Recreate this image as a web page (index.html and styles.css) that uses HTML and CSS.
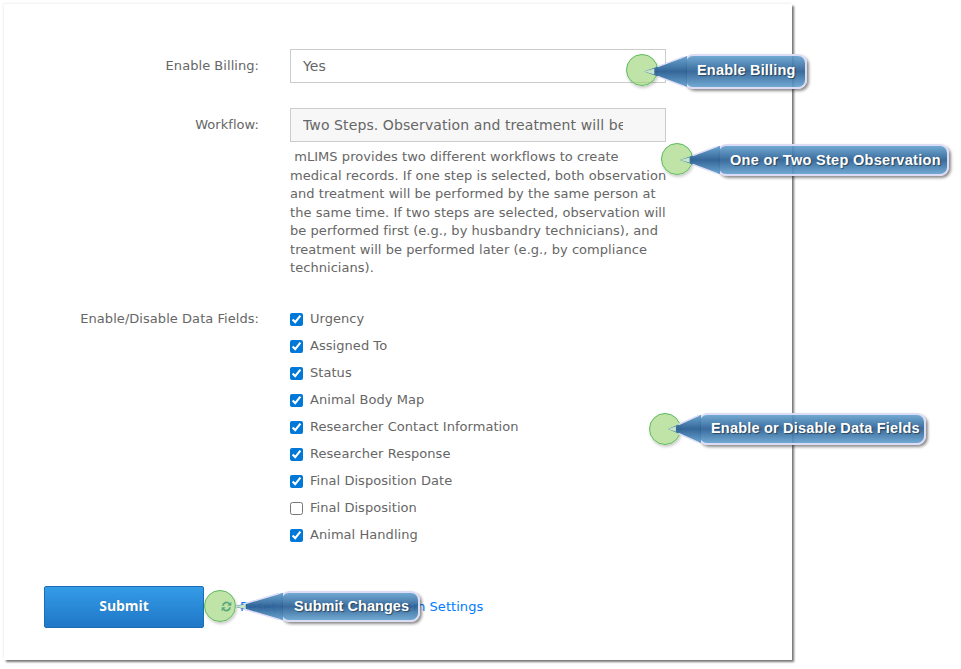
FILE: index.html
```html
<!DOCTYPE html>
<html lang="en">
<head>
<meta charset="utf-8">
<title>Settings</title>
<link rel="stylesheet" href="styles.css">
</head>
<body>
<main class="card">
  <form class="form">
    <div class="row">
      <label class="label" for="billing">Enable Billing:</label>
      <div class="field"><input id="billing" class="input" type="text" value="Yes" readonly></div>
    </div>
    <div class="row row-workflow">
      <label class="label" for="workflow">Workflow:</label>
      <div class="field">
        <input id="workflow" class="input input-muted" type="text" value="Two Steps. Observation and treatment will be performed separately" readonly>
        <p class="help">&nbsp;mLIMS provides two different workflows to create medical records. If one step is selected, both observation and treatment will be performed by the same person at the same time. If two steps are selected, observation will be performed first (e.g., by husbandry technicians), and treatment will be performed later (e.g., by compliance technicians).</p>
      </div>
    </div>
    <div class="row row-fields">
      <span class="label label-fields">Enable/Disable Data Fields:</span>
      <div class="checks">
        <label class="check"><input type="checkbox" checked>Urgency</label>
        <label class="check"><input type="checkbox" checked>Assigned To</label>
        <label class="check"><input type="checkbox" checked>Status</label>
        <label class="check"><input type="checkbox" checked>Animal Body Map</label>
        <label class="check"><input type="checkbox" checked>Researcher Contact Information</label>
        <label class="check"><input type="checkbox" checked>Researcher Response</label>
        <label class="check"><input type="checkbox" checked>Final Disposition Date</label>
        <label class="check"><input type="checkbox">Final Disposition</label>
        <label class="check"><input type="checkbox" checked>Animal Handling</label>
      </div>
    </div>
    <div class="actions">
      <button class="submit" type="button">Submit</button>
      <a class="link link-reset" href="#">
        <svg class="refresh" viewBox="0 0 16 16" width="13" height="13" aria-hidden="true"><path d="M2.4 7A5.7 5.7 0 0 1 12.3 3.7L14 2v5H9l1.8-1.8A3.5 3.5 0 0 0 4.8 7Z"/><path d="M13.6 9A5.7 5.7 0 0 1 3.7 12.3L2 14V9h5l-1.8 1.8A3.5 3.5 0 0 0 11.2 9Z"/></svg>Reset</a>
      <a class="link" href="#">System Settings</a>
    </div>
  </form>
</main>

<div class="dot dot-billing"></div>
<div class="bubble bubble-billing">Enable Billing</div>
<svg class="tail tail-billing" viewBox="0 0 50 36" preserveAspectRatio="none" aria-hidden="true">
  <defs>
    <linearGradient id="tailfill" x1="0" y1="0" x2="0" y2="1">
      <stop offset="0" stop-color="#62a0cd"/>
      <stop offset=".5" stop-color="#2a5f94"/>
      <stop offset="1" stop-color="#62a0cd"/>
    </linearGradient>
  </defs>
  <polygon class="tail-fill" points="0,18 50,2 50,34"/>
  <polygon class="tail-tip" points="0,18 12,15 12,21"/>
  <polyline class="tail-edge" points="16,13 46,3"/>
  <polyline class="tail-edge" points="16,23 46,33"/>
</svg>

<div class="dot dot-steps"></div>
<div class="bubble bubble-steps">One or Two Step Observation</div>
<svg class="tail tail-steps" viewBox="0 0 50 36" preserveAspectRatio="none" aria-hidden="true">
  <polygon class="tail-fill" points="0,18 50,2 50,34"/>
  <polygon class="tail-tip" points="0,18 12,15 12,21"/>
  <polyline class="tail-edge" points="16,13 46,3"/>
  <polyline class="tail-edge" points="16,23 46,33"/>
</svg>

<div class="dot dot-fields"></div>
<div class="bubble bubble-fields">Enable or Disable Data Fields</div>
<svg class="tail tail-fields" viewBox="0 0 50 36" preserveAspectRatio="none" aria-hidden="true">
  <polygon class="tail-fill" points="0,18 50,2 50,34"/>
  <polygon class="tail-tip" points="0,18 12,15 12,21"/>
  <polyline class="tail-edge" points="16,13 46,3"/>
  <polyline class="tail-edge" points="16,23 46,33"/>
</svg>

<div class="dot dot-submit"></div>
<div class="bubble bubble-submit">Submit Changes</div>
<svg class="tail tail-submit" viewBox="0 0 50 36" preserveAspectRatio="none" aria-hidden="true">
  <polygon class="tail-fill" points="0,18 50,2 50,34"/>
  <polygon class="tail-tip" points="0,18 12,15 12,21"/>
  <polyline class="tail-edge" points="10,15 46,3"/>
  <polyline class="tail-edge" points="10,21 46,33"/>
</svg>
</body>
</html>
```
FILE: styles.css
```css
* { box-sizing: border-box; }
html, body { margin: 0; padding: 0; background: #fff; }
body {
  position: relative;
  width: 961px;
  height: 669px;
  overflow: hidden;
  font-family: "DejaVu Sans", Verdana, sans-serif;
  font-size: 13px;
  letter-spacing: .05px;
  color: #666;
}
.card {
  width: 788px;
  height: 656px;
  margin: 4px 0 0 4px;
  padding-top: 45px;
  background: #fff;
  box-shadow: 2px 2px 2px rgba(60,60,60,.7), -1px -1px 2px rgba(0,0,0,.06);
}
.form { display: flex; flex-direction: column; }
.row { display: grid; grid-template-columns: 255px 376px; column-gap: 31px; }
.row-workflow { margin-top: 25px; }
.row-fields { margin-top: 27px; }
.label { text-align: right; padding-top: 8px; line-height: 18px; }
.label-fields { padding-top: 5px; }
.field { min-width: 0; }
.input {
  display: block;
  width: 100%;
  height: 34px;
  padding: 0 42px 0 12px;
  border: 1px solid #ccc;
  background: #fff;
  color: #666;
  font: 14px "DejaVu Sans", Verdana, sans-serif;
  letter-spacing: .1px;
  outline: none;
}
.input-muted { background: #f7f7f7; }
.help { margin: 6px -2px 0 0; line-height: 18.57px; }
.checks { display: flex; flex-direction: column; }
.check { display: flex; align-items: center; height: 27px; }
.check input { width: 13px; height: 13px; margin: 2px 7px 0 0; accent-color: #0078d7; }
.actions { display: flex; align-items: center; margin: 38px 0 0 40px; }
.submit {
  width: 160px;
  height: 42px;
  padding: 0 0 3px;
  border: 1px solid #1b6db5;
  border-radius: 2px;
  background: linear-gradient(#349ce8, #1f77c6);
  color: #fff;
  font: bold 14px "Open Sans", "Liberation Sans", sans-serif;
  letter-spacing: -.1px;
  text-shadow: 0 0 1px rgba(0,0,0,.3);
}
.link { color: #007bff; text-decoration: none; margin-left: 100px; }
.link-reset { display: flex; align-items: center; gap: 7px; margin-left: 16px; margin-right: 0; }
.refresh { fill: #0b6a94; }

.dot {
  position: absolute;
  width: 32px;
  height: 32px;
  border-radius: 50%;
  border: 1px solid #5cbb5c;
  background: rgba(150,210,110,.6);
  box-shadow: 1px 2px 3px rgba(0,0,0,.2);
}
.dot-billing { left: 626px; top: 54px; }
.dot-steps { left: 661px; top: 143px; }
.dot-fields { left: 649px; top: 413px; }
.dot-submit { left: 204px; top: 590px; }

.bubble {
  position: absolute;
  display: flex;
  align-items: center;
  padding: 0 0 1px 11px;
  border: 2px solid #dcdcf6;
  border-radius: 9px;
  background: linear-gradient(rgba(98,160,205,.9), rgba(42,95,148,.92) 50%, rgba(98,160,205,.9));
  box-shadow: 2px 2px 3px rgba(0,0,0,.45);
  color: #fff;
  font: bold 14.5px "Liberation Sans", Arial, sans-serif;
  letter-spacing: .2px;
  text-shadow: 1px 1px 1px rgba(0,0,0,.45);
  white-space: nowrap;
}
.bubble-billing { left: 684px; top: 54px; width: 123px; height: 35px; padding-bottom: 3px; }
.bubble-steps { left: 717px; top: 144px; width: 232px; height: 32px; padding-bottom: 0; letter-spacing: .3px; }
.bubble-fields { left: 698px; top: 413px; width: 228px; height: 32px; padding-bottom: 2px; }
.bubble-submit { left: 280px; top: 591px; width: 140px; height: 31px; padding-left: 12px; letter-spacing: .05px; }

.tail { position: absolute; overflow: visible; }
.tail-fill { fill: url(#tailfill); opacity: .95; }
.tail-tip { fill: #c4e4cc; }
.tail-edge { fill: none; stroke: #dcdcf6; stroke-width: 1.5; vector-effect: non-scaling-stroke; }
.tail-billing { left: 644px; top: 54px; width: 43px; height: 35px; }
.tail-steps { left: 680px; top: 144px; width: 40px; height: 32px; }
.tail-fields { left: 668px; top: 413px; width: 33px; height: 32px; }
.tail-submit { left: 234px; top: 591px; width: 49px; height: 31px; }
```
